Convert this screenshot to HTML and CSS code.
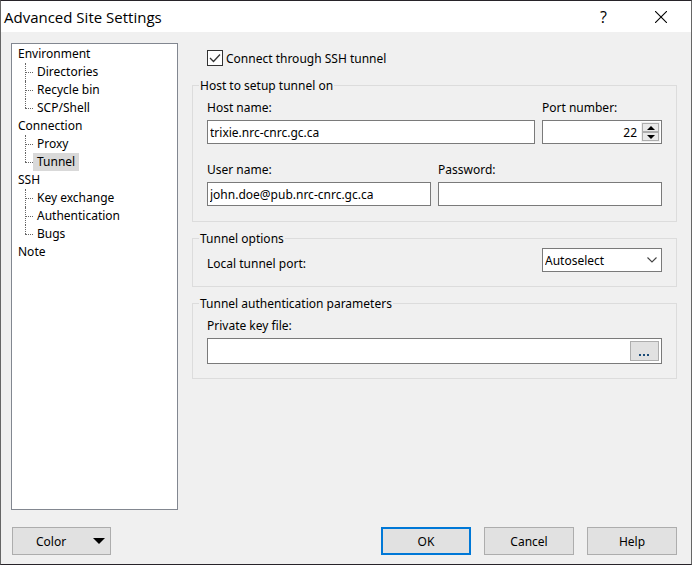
FILE: index.html
```html
<!DOCTYPE html>
<html lang="en">
<head>
	<meta charset="UTF-8">
	<meta name="viewport" content="width=device-width, initial-scale=1.0">
	<title>Advanced Site Settings</title>
	<link rel="stylesheet" href="styles.css">
</head>
<body>
	<div class="window">
		<header class="titlebar">
			<h1 class="title">Advanced Site Settings</h1>
			<button class="title_btn help_btn" type="button">?</button>
			<button class="title_btn" type="button" aria-label="Close">
				<svg width="12" height="12" viewBox="0 0 12 12"><path d="M0 0L12 12M12 0L0 12" stroke="#000" stroke-width="1.1"/></svg>
			</button>
		</header>

		<form class="form">
			<main class="main">
				<nav class="tree">
					<ul>
						<li><a href="#">Environment</a>
							<ul class="sub">
								<li><a href="#">Directories</a></li>
								<li><a href="#">Recycle bin</a></li>
								<li><a href="#">SCP/Shell</a></li>
							</ul>
						</li>
						<li><a href="#">Connection</a>
							<ul class="sub">
								<li><a href="#">Proxy</a></li>
								<li><a href="#" class="active">Tunnel</a></li>
							</ul>
						</li>
						<li><a href="#">SSH</a>
							<ul class="sub">
								<li><a href="#">Key exchange</a></li>
								<li><a href="#">Authentication</a></li>
								<li><a href="#">Bugs</a></li>
							</ul>
						</li>
						<li><a href="#">Note</a></li>
					</ul>
				</nav>

				<div class="content">
					<label class="check">
						<span class="check_box">
							<input type="checkbox" checked>
							<svg width="16" height="16" viewBox="0 0 16 16"><path d="M3 8L6.5 11.5L13 4.5" fill="none" stroke="#333" stroke-width="1.3"/></svg>
						</span>
						Connect through SSH tunnel
					</label>

					<fieldset class="group host">
						<legend>Host to setup tunnel on</legend>
						<div class="row">
							<div class="field">
								<label for="host">Host name:</label>
								<input class="box" type="text" id="host" value="trixie.nrc-cnrc.gc.ca">
							</div>
							<div class="field port">
								<label for="port">Port number:</label>
								<div class="box spin">
									<input type="number" id="port" value="22">
									<div class="spin_btns">
										<button type="button" aria-label="Up"><svg width="8" height="4" viewBox="0 0 8 4"><path d="M0 4L4 0L8 4Z"/></svg></button>
										<button type="button" aria-label="Down"><svg width="8" height="4" viewBox="0 0 8 4"><path d="M0 0H8L4 4Z"/></svg></button>
									</div>
								</div>
							</div>
						</div>
						<div class="row">
							<div class="field">
								<label for="user">User name:</label>
								<input class="box" type="text" id="user" value="john.doe@pub.nrc-cnrc.gc.ca">
							</div>
							<div class="field">
								<label for="password">Password:</label>
								<input class="box" type="password" id="password">
							</div>
						</div>
					</fieldset>

					<fieldset class="group options">
						<legend>Tunnel options</legend>
						<div class="row">
							<label class="grow" for="local">Local tunnel port:</label>
							<div class="select port">
								<select class="box" id="local">
									<option>Autoselect</option>
								</select>
								<svg width="10" height="6" viewBox="0 0 10 6"><path d="M0.5 0.5L5 5L9.5 0.5" fill="none" stroke="#444" stroke-width="1.1"/></svg>
							</div>
						</div>
					</fieldset>

					<fieldset class="group">
						<legend>Tunnel authentication parameters</legend>
						<div class="field">
							<label for="key">Private key file:</label>
							<div class="box file">
								<input type="text" id="key">
								<button class="browse" type="button" aria-label="Browse">
									<svg width="11" height="2" viewBox="0 0 11 2"><path d="M0 0h2v2H0zM4 0h2v2H4zM8 0h2v2H8z" fill="#1b4c78"/></svg>
								</button>
							</div>
						</div>
					</fieldset>
				</div>
			</main>

			<footer class="footer">
				<button class="btn color_btn" type="button">Color
					<svg width="12" height="6" viewBox="0 0 12 6"><path d="M0 0H12L6 6Z"/></svg>
				</button>
				<button class="btn ok" type="submit">OK</button>
				<button class="btn" type="button">Cancel</button>
				<button class="btn" type="button">Help</button>
			</footer>
		</form>
	</div>
</body>
</html>
```

FILE: styles.css
```css
*{margin:0; padding:0; box-sizing:border-box;}
li{list-style:none;}
a{color:inherit; text-decoration:none;}
svg{display:block;}
body,input,select,button{
	font-family:"Noto Sans",sans-serif;
	font-size:12px;
	color:#000;
}
input,select{
	border:0;
	outline:0;
	background:#fff;
}
.window{
	display:flex;
	flex-direction:column;
	min-height:100vh;
	border:1px solid #666;
	border-top-color:#272329;
	border-bottom-color:#272329;
	background:#f0f0f0;
}
.titlebar{
	display:flex;
	align-items:center;
	height:31px;
	padding:0 2px 0 3px;
	background:#fff;
}
.title{
	flex:1;
	font:15px/18px "Open Sans","Noto Sans",sans-serif;
}
.title_btn{
	display:flex;
	justify-content:center;
	align-items:center;
	width:57px;
	height:30px;
	border:0;
	background:none;
}
.help_btn{
	font:16px "Open Sans","Noto Sans",sans-serif;
}
.form{
	display:flex;
	flex:1;
	flex-direction:column;
}
.main{
	display:flex;
	flex:1;
	gap:14px;
	padding:11px 14px 0 10px;
}
.tree{
	width:167px;
	padding:1px 6px;
	border:1px solid #828790;
	background:#fff;
}
.tree a{
	display:block;
	line-height:18px;
}
.sub{
	padding-left:7px;
}
.sub li{
	position:relative;
	padding-left:8px;
}
.sub a{
	display:inline-block;
	padding:0 4px;
	vertical-align:top;
}
.sub .active{
	background:#d9d9d9;
}
/* dotted branch lines */
.sub li::before,
.sub li::after{
	content:"";
	position:absolute;
	top:0;
	left:0;
	height:18px;
	border-left:1px dotted #666;
}
.sub li:last-child::before{
	height:9px;
}
.sub li::after{
	top:9px;
	width:8px;
	height:0;
	border-left:0;
	border-top:1px dotted #666;
}
.content{
	display:flex;
	flex:1;
	flex-direction:column;
	gap:9px;
	padding-top:7px;
}
.check{
	display:flex;
	align-items:center;
	gap:3px;
	height:16px;
	margin:0 0 3px 15px;
}
.check_box{
	position:relative;
}
.check_box input{
	display:block;
	width:16px;
	height:16px;
	appearance:none;
	border:1px solid #333;
}
.check_box svg{
	position:absolute;
	top:0;
	left:0;
	pointer-events:none;
}
.check_box input:not(:checked) + svg{
	display:none;
}
.group{
	min-width:0;
	padding:7px 14px 14px;
	border:1px solid #dcdcdc;
}
.group legend{
	margin-left:-8px;
	padding:0 1px;
	line-height:15px;
}
.host{
	padding-bottom:15px;
}
.row{
	display:flex;
	gap:7px;
}
.row + .row{
	margin-top:18px;
}
.field{
	display:flex;
	flex:1;
	flex-direction:column;
	gap:5px;
	min-width:0;
	line-height:15px;
}
.port{
	flex:0 0 120px;
}
.box{
	width:100%;
	height:24px;
	padding:0 2px;
	border:1px solid #7a7a7a;
	background:#fff;
}
.spin{
	display:flex;
	align-items:center;
	padding:0 1px;
}
.spin input{
	flex:1;
	min-width:0;
	padding-right:4px;
	appearance:textfield;
	text-align:right;
}
.spin input::-webkit-inner-spin-button{
	display:none;
}
.spin_btns{
	width:19px;
	padding:1px;
	background:#f0f0f0;
}
.spin_btns button{
	display:flex;
	justify-content:center;
	align-items:center;
	width:100%;
	height:9px;
	border:1px solid #adadad;
	background:#e9e9e9;
}
.options{
	padding-top:2px;
}
.options .row{
	align-items:center;
}
.grow{
	flex:1;
	padding-top:7px;
}
.select{
	position:relative;
}
.select select{
	display:block;
	appearance:none;
	border-radius:0;
}
.select svg{
	position:absolute;
	top:9px;
	right:5px;
	pointer-events:none;
}
.file{
	display:flex;
	height:26px;
	padding:2px;
}
.file input{
	flex:1;
	min-width:0;
}
.browse{
	display:flex;
	justify-content:center;
	align-items:flex-end;
	width:29px;
	padding-bottom:4px;
	border:1px solid #adadad;
	background:#e1e1e1;
}
.footer{
	display:flex;
	gap:13px;
	padding:17px 14px 9px 11px;
}
.btn{
	width:90px;
	height:28px;
	border:1px solid #adadad;
	background:#e1e1e1;
}
.color_btn{
	display:flex;
	justify-content:space-between;
	align-items:center;
	width:99px;
	margin-right:auto;
	padding:0 5px 0 23px;
}
.ok{
	border:2px solid #0078d7;
}
```
